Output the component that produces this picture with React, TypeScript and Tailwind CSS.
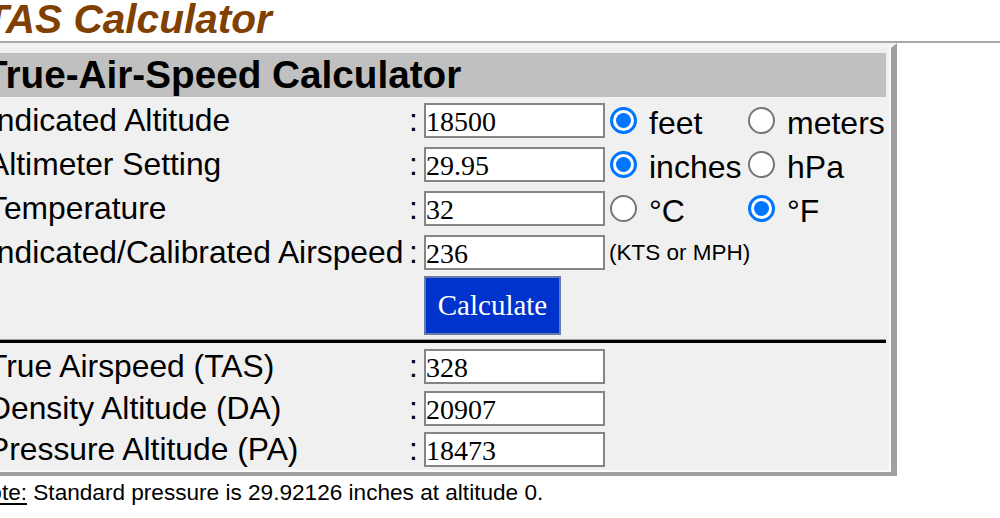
import React from 'react';

const inputCls =
  "w-[181px] h-[35px] shrink-0 border-2 border-[#858585] bg-white px-0 pt-[3px] text-[28px] leading-none text-black font-['Liberation_Serif','Times_New_Roman',serif] outline-none";

function Radio({ checked }: { checked?: boolean }) {
  if (checked) {
    return (
      <span className="flex h-[27px] w-[27px] shrink-0 items-center justify-center rounded-full border-[3px] border-[#0075ff] bg-white">
        <span className="h-[15px] w-[15px] rounded-full bg-[#0075ff]" />
      </span>
    );
  }
  return <span className="h-[27px] w-[27px] shrink-0 rounded-full border-2 border-[#767676] bg-white" />;
}

function Option({ checked, label, wide }: { checked?: boolean; label: string; wide?: boolean }) {
  return (
    <div className={wide ? 'flex w-[143px] shrink-0 items-center pl-[5px]' : 'flex shrink-0 items-center'}>
      <Radio checked={checked} />
      <span className="ml-[12px] translate-y-[3px] whitespace-nowrap text-[32px] leading-[35px]">{label}</span>
    </div>
  );
}

function Row({ label, value, children }: { label: string; value: string; children?: React.ReactNode }) {
  return (
    <div className="flex h-[35px] items-center">
      <div className="w-[424px] shrink-0 whitespace-nowrap pl-[8px] leading-[35px]">{label}</div>
      <div className="w-[20px] shrink-0 pl-[5px] leading-[35px]">:</div>
      <input readOnly value={value} className={inputCls} />
      {children}
    </div>
  );
}

export default function App() {
  return (
    <div className="h-[518px] w-[1000px] overflow-hidden bg-white text-black font-['Liberation_Sans',Arial,sans-serif]">
      {/* Page title */}
      <div className="ml-[-16px] mt-[-1px] h-[42px] whitespace-nowrap text-[40.6px] font-bold italic leading-[41px] text-[#804000]">
        TAS Calculator
      </div>
      <div className="h-[2px] w-full bg-[#a9a9a9]" />

      {/* Calculator box */}
      <div className="ml-[-30px] w-[927px] border-t-[5px] border-r-[6px] border-b-[4px] border-l-[5px] border-t-[#f3f3f3] border-l-[#f3f3f3] border-r-[#a0a0a0] border-b-[#a0a0a0] bg-[#f0f0f0] pt-[5px] pr-[5px] pb-[5px] pl-[5px] text-[31.8px] shadow-[inset_-2px_-2px_0_0_#fbfbfb]">
        <div className="h-[44px] whitespace-nowrap bg-[#c0c0c0] pl-[4px] text-[38.7px] font-bold leading-[44px]">
          True-Air-Speed Calculator
        </div>

        <div className="mt-[6px] flex flex-col gap-[9px]">
          <Row label="Indicated Altitude" value="18500">
            <Option wide checked label="feet" />
            <Option label="meters" />
          </Row>
          <Row label="Altimeter Setting" value="29.95">
            <Option wide checked label="inches" />
            <Option label="hPa" />
          </Row>
          <Row label="Temperature" value="32">
            <Option wide label="°C" />
            <Option checked label="°F" />
          </Row>
          <Row label="Indicated/Calibrated Airspeed" value="236">
            <span className="ml-[4px] whitespace-nowrap text-[22.5px]">(KTS or MPH)</span>
          </Row>
        </div>

        <button className="ml-[444px] mt-[6px] block h-[59px] w-[137px] border-2 border-[#6a7aa6] bg-[#0033cc] text-[29px] text-white font-['Liberation_Serif','Times_New_Roman',serif]">
          Calculate
        </button>

        <div className="mt-[4px] h-[1px] bg-[#9a9a9a]" />
        <div className="h-[3px] bg-black" />

        <div className="mt-[6px]">
          <Row label="True Airspeed (TAS)" value="328" />
        </div>
        <div className="mt-[7px]">
          <Row label="Density Altitude (DA)" value="20907" />
        </div>
        <div className="mt-[6px]">
          <Row label="Pressure Altitude (PA)" value="18473" />
        </div>
      </div>

      {/* Footnote */}
      <div className="ml-[-27px] whitespace-nowrap text-[22.6px]">
        <span className="underline decoration-[1.5px] underline-offset-[3px]">Note:</span> Standard pressure is 29.92126 inches at altitude 0.
      </div>
    </div>
  );
}
